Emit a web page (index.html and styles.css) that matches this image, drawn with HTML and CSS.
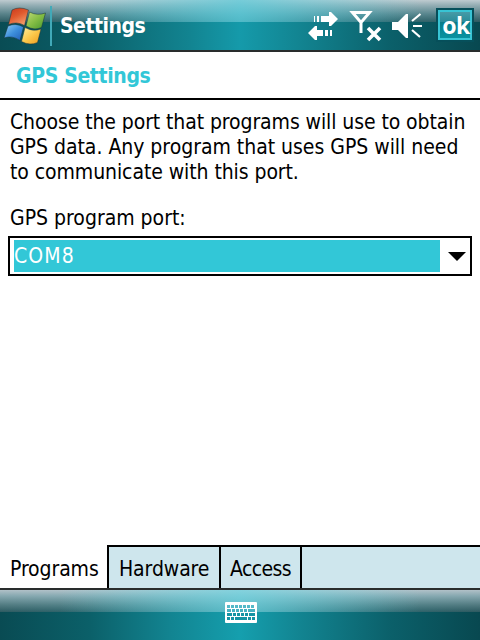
FILE: index.html
```
<!DOCTYPE html>
<html lang="en">
<head>
<meta charset="utf-8">
<title>Settings</title>
<link rel="stylesheet" href="styles.css">
</head>
<body>
<div class="screen">
  <header class="bar topbar">
    <svg class="flag" width="44" height="46" viewBox="0 0 44 46">
      <defs>
        <linearGradient id="r" x1="0" y1="0" x2="0.6" y2="1"><stop offset="0" stop-color="#c8371b"/><stop offset=".5" stop-color="#e0592d"/><stop offset="1" stop-color="#f39a68"/></linearGradient>
        <linearGradient id="g" x1="0" y1="0" x2="1" y2="1"><stop offset="0" stop-color="#c0da78"/><stop offset=".5" stop-color="#84bd45"/><stop offset="1" stop-color="#45972e"/></linearGradient>
        <linearGradient id="b" x1="0" y1="0" x2="1" y2="1"><stop offset="0" stop-color="#8fcdf5"/><stop offset=".5" stop-color="#3d8fdc"/><stop offset="1" stop-color="#1f5bb5"/></linearGradient>
        <linearGradient id="y" x1="0" y1="0" x2="1" y2="1"><stop offset="0" stop-color="#fff0a0"/><stop offset=".5" stop-color="#fbc94c"/><stop offset="1" stop-color="#ee9a1d"/></linearGradient>
      </defs>
      <g stroke="#17343a" stroke-width=".5">
        <path fill="url(#r)" d="M9 8Q16 4 25.500 8L21.500 23.500Q14 19 5.500 22.500Z"/>
        <path fill="url(#g)" d="M26.500 10Q34 14 42.500 11L38.500 25.500Q31 29 23 24Z"/>
        <path fill="url(#b)" d="M5 24Q13 20.500 20.500 25L17 38.500Q9 33 1 36Z"/>
        <path fill="url(#y)" d="M22 25.500Q30 30 38 27L34.500 40.500Q27 44 18.500 39.500Z"/>
      </g>
    </svg>
    <span class="divider"></span>
    <h1 class="title">Settings</h1>
    <svg class="status" width="118" height="36" viewBox="0 0 118 36" fill="#fff">
      <path d="M7 8h1v6H7zM10 8h2v6h-2zM14 8h8V4h2l7 7-7 7h-2v-4h-8z"/>
      <path d="M1 25l7-7h2v4h6v6h-6v4H8zM18 22h3v6h-3zM23 22h2v6h-2z"/>
      <path fill="none" stroke="#fff" stroke-width="3" d="M45.500 4.500H62.500L54 14.500ZM54 14V25"/>
      <path fill="none" stroke="#fff" stroke-width="3.600" d="M61 20L73 32M73 20L61 32"/>
      <path d="M85 14h6l8-8h2v24h-2l-8-8h-6z"/>
      <path fill="none" stroke="#fff" stroke-width="2.200" d="M105 13L113.500 6M106 18h9M105 22l8 7"/>
    </svg>
    <button class="ok">ok</button>
  </header>
  <h2 class="heading">GPS Settings</h2>
  <main class="content">
    <p class="line l1">Choose the port that programs will use to obtain</p>
    <p class="line l2">GPS data. Any program that uses GPS will need</p>
    <p class="line l3">to communicate with this port.</p>
    <p class="line label">GPS program port:</p>
    <div class="select">
      <span class="value">COM8</span>
      <svg class="arrow" width="18" height="9" viewBox="0 0 18 9"><path d="M0 0h18L9 9z"/></svg>
    </div>
  </main>
  <nav class="tabs">
    <span class="tab active">Programs</span>
    <span class="tab hardware">Hardware</span>
    <span class="tab access">Access</span>
    <span class="tab rest"></span>
  </nav>
  <footer class="bar bottombar">
    <svg width="32" height="21" viewBox="0 0 32 21">
      <rect width="32" height="21" rx="1" fill="#fff"/>
      <g fill="none" stroke-width="3">
        <path stroke="#55b9c8" stroke-dasharray="3 1" d="M2 4.500h28"/>
        <path stroke="#45b1c1" stroke-dasharray="4 1 3 1 3 1 3 1 3 1 7 1" d="M2 8.500h28"/>
        <path stroke="#1594a4" stroke-dasharray="5 1 3 1 3 1 3 1 3 1 6 1" d="M2 12.500h28"/>
        <path stroke="#1594a4" stroke-dasharray="3 1 3 1 12 1 3 1 3 1" d="M2 16.500h28"/>
      </g>
    </svg>
  </footer>
</div>
</body>
</html>
```
FILE: styles.css
```
* { box-sizing: border-box; }
body { margin: 0; background: #fff; }
.screen {
  width: 480px; height: 640px;
  display: flex; flex-direction: column;
  font-family: "DejaVu Sans Condensed", "DejaVu Sans", sans-serif;
  font-stretch: condensed;
  font-size: 21px; color: #000; background: #fff;
  overflow: hidden;
}
h1, h2, p { margin: 0; }
.bar { display: flex; flex: none; height: 52px; }
.topbar {
  border-bottom: 2px solid #292d2d;
  background:
    linear-gradient(to right, transparent 60px, rgba(90,205,220,.72) 240px, transparent 420px) 0 0 / 480px 22px no-repeat,
    linear-gradient(to bottom, #bfcbd0 0, rgba(175,192,198,.85) 5px, rgba(140,165,172,.6) 14px, rgba(90,110,115,.45) 22px, transparent 22px),
    linear-gradient(to right, #094c54 0, #0b6069 90px, #128491 190px, #159aaa 240px, #128491 300px, #0b606a 390px, #084850 480px);
}
.flag { margin: 2px 0 0 3px; flex: none; }
.divider { width: 2px; height: 40px; margin: 6px 0 0 3px; background: #41a9b8; }
.title {
  width: 90px; margin-left: 8px;
  font: bold 21px/52px "DejaVu Sans Condensed", "DejaVu Sans", sans-serif;
  font-stretch: condensed; letter-spacing: -.5px; color: #fff;
  white-space: nowrap;
}
.status { margin: 8px 0 0 157px; flex: none; }
.ok {
  width: 38px; height: 34px; margin: 8px 0 0 11px; padding: 0 0 0 2px; flex: none;
  border: 2px solid #064f5a;
  box-shadow: inset 0 0 0 2px #38c4d4;
  background: linear-gradient(#4d9daa 0, #298b99 12px, #087c89 12px, #0995a4 100%);
  color: #fff;
  font: bold 23px/30px "Noto Sans", sans-serif; letter-spacing: -.6px;
}
.heading {
  height: 48px; flex: none; padding-left: 16px;
  border-bottom: 2px solid #000;
  font-size: 21px; line-height: 48px; font-weight: bold; letter-spacing: -.35px;
  color: #32c7d7;
}
.content { flex: 1; padding: 10px 8px 0; }
.line { height: 25px; line-height: 25px; padding-left: 2px; white-space: nowrap; }
.l1 { letter-spacing: -.09px; }
.l2 { letter-spacing: -.02px; }
.l3 { letter-spacing: -.08px; }
.label { margin-top: 20px; line-height: 27px; }
.select {
  display: flex; align-items: center; height: 40px; margin-top: 6px; padding: 2px 4px;
  border: 2px solid #000;
}
.value {
  width: 426px; height: 32px; line-height: 32px; letter-spacing: 1.1px;
  background: #32c7d7; color: #fff;
}
.arrow { margin-left: 8px; }
.tabs { display: flex; flex: none; height: 43px; line-height: 45px; }
.tab {
  border-top: 2px solid #000; border-left: 2px solid #000;
  background: #cee6ed; padding-left: 10px; white-space: nowrap;
  letter-spacing: -.1px;
}
.active { width: 107px; border-color: #fff; background: #fff; padding-left: 8px; }
.hardware { width: 112px; }
.access { width: 81px; padding-left: 9px; letter-spacing: -.6px; }
.rest { flex: 1; }
.bottombar {
  justify-content: center; padding: 12px 0 0 2px;
  border-top: 2px solid #292d2d;
  background:
    linear-gradient(to right, transparent 60px, rgba(110,215,228,.68) 240px, transparent 420px) 0 0 / 480px 22px no-repeat,
    linear-gradient(to bottom, rgba(195,205,212,.9) 0, rgba(165,190,198,.8) 6px, rgba(130,155,160,.6) 15px, rgba(90,110,115,.45) 22px, transparent 22px),
    linear-gradient(to right, #094b53 0, #0b6069 90px, #128491 170px, #159fae 240px, #128491 300px, #0b606a 390px, #084850 480px);
}
```
